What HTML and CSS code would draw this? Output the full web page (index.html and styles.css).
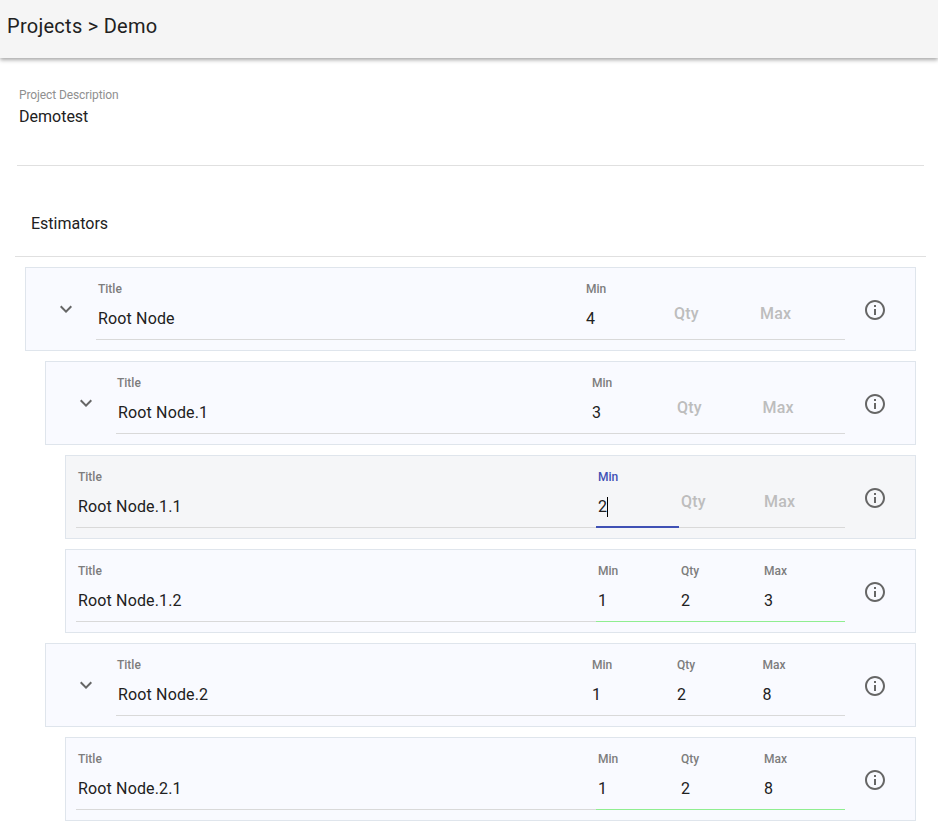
FILE: index.html
```html
<!DOCTYPE html>
<html lang="en">
<head>
    <meta charset="UTF-8">
    <meta name="viewport" content="width=device-width, initial-scale=1.0">
    <title>Projects > Demo</title>
    <link rel="stylesheet" href="styles.css">
</head>
<body>
    <header class="topbar">Projects &gt; Demo</header>

    <section class="description">
        <div class="description_label">Project Description</div>
        <div class="description_value">Demotest</div>
    </section>

    <h2 class="section_title">Estimators</h2>

    <div class="tree">
        <div class="node depth0">
            <svg class="chevron" viewBox="0 0 24 24"><path d="M16.59 8.59 12 13.17 7.41 8.59 6 10l6 6 6-6z"/></svg>
            <div class="fields">
                <div class="field"><span class="label">Title</span><span class="value">Root Node</span></div>
                <div class="field"><span class="label">Min</span><span class="value">4</span></div>
                <div class="field empty"><span class="label">Qty</span></div>
                <div class="field empty"><span class="label">Max</span></div>
            </div>
            <svg class="info" viewBox="0 0 24 24"><path d="M11 7h2v2h-2zm0 4h2v6h-2zm1-9C6.48 2 2 6.48 2 12s4.48 10 10 10 10-4.48 10-10S17.52 2 12 2zm0 18c-4.41 0-8-3.59-8-8s3.59-8 8-8 8 3.59 8 8-3.59 8-8 8z"/></svg>
        </div>

        <div class="node depth1">
            <svg class="chevron" viewBox="0 0 24 24"><path d="M16.59 8.59 12 13.17 7.41 8.59 6 10l6 6 6-6z"/></svg>
            <div class="fields">
                <div class="field"><span class="label">Title</span><span class="value">Root Node.1</span></div>
                <div class="field"><span class="label">Min</span><span class="value">3</span></div>
                <div class="field empty"><span class="label">Qty</span></div>
                <div class="field empty"><span class="label">Max</span></div>
            </div>
            <svg class="info" viewBox="0 0 24 24"><path d="M11 7h2v2h-2zm0 4h2v6h-2zm1-9C6.48 2 2 6.48 2 12s4.48 10 10 10 10-4.48 10-10S17.52 2 12 2zm0 18c-4.41 0-8-3.59-8-8s3.59-8 8-8 8 3.59 8 8-3.59 8-8 8z"/></svg>
        </div>

        <div class="node depth2 hovered">
            <div class="fields">
                <div class="field"><span class="label">Title</span><span class="value">Root Node.1.1</span></div>
                <div class="field focused"><span class="label">Min</span><span class="value caret">2</span></div>
                <div class="field empty"><span class="label">Qty</span></div>
                <div class="field empty"><span class="label">Max</span></div>
            </div>
            <svg class="info" viewBox="0 0 24 24"><path d="M11 7h2v2h-2zm0 4h2v6h-2zm1-9C6.48 2 2 6.48 2 12s4.48 10 10 10 10-4.48 10-10S17.52 2 12 2zm0 18c-4.41 0-8-3.59-8-8s3.59-8 8-8 8 3.59 8 8-3.59 8-8 8z"/></svg>
        </div>

        <div class="node depth2">
            <div class="fields">
                <div class="field"><span class="label">Title</span><span class="value">Root Node.1.2</span></div>
                <div class="field valid"><span class="label">Min</span><span class="value">1</span></div>
                <div class="field valid"><span class="label">Qty</span><span class="value">2</span></div>
                <div class="field valid"><span class="label">Max</span><span class="value">3</span></div>
            </div>
            <svg class="info" viewBox="0 0 24 24"><path d="M11 7h2v2h-2zm0 4h2v6h-2zm1-9C6.48 2 2 6.48 2 12s4.48 10 10 10 10-4.48 10-10S17.52 2 12 2zm0 18c-4.41 0-8-3.59-8-8s3.59-8 8-8 8 3.59 8 8-3.59 8-8 8z"/></svg>
        </div>

        <div class="node depth1">
            <svg class="chevron" viewBox="0 0 24 24"><path d="M16.59 8.59 12 13.17 7.41 8.59 6 10l6 6 6-6z"/></svg>
            <div class="fields">
                <div class="field"><span class="label">Title</span><span class="value">Root Node.2</span></div>
                <div class="field"><span class="label">Min</span><span class="value">1</span></div>
                <div class="field"><span class="label">Qty</span><span class="value">2</span></div>
                <div class="field"><span class="label">Max</span><span class="value">8</span></div>
            </div>
            <svg class="info" viewBox="0 0 24 24"><path d="M11 7h2v2h-2zm0 4h2v6h-2zm1-9C6.48 2 2 6.48 2 12s4.48 10 10 10 10-4.48 10-10S17.52 2 12 2zm0 18c-4.41 0-8-3.59-8-8s3.59-8 8-8 8 3.59 8 8-3.59 8-8 8z"/></svg>
        </div>

        <div class="node depth2">
            <div class="fields">
                <div class="field"><span class="label">Title</span><span class="value">Root Node.2.1</span></div>
                <div class="field valid"><span class="label">Min</span><span class="value">1</span></div>
                <div class="field valid"><span class="label">Qty</span><span class="value">2</span></div>
                <div class="field valid"><span class="label">Max</span><span class="value">8</span></div>
            </div>
            <svg class="info" viewBox="0 0 24 24"><path d="M11 7h2v2h-2zm0 4h2v6h-2zm1-9C6.48 2 2 6.48 2 12s4.48 10 10 10 10-4.48 10-10S17.52 2 12 2zm0 18c-4.41 0-8-3.59-8-8s3.59-8 8-8 8 3.59 8 8-3.59 8-8 8z"/></svg>
        </div>
    </div>
</body>
</html>
```

FILE: styles.css
```css
body
{
    margin: 0;
    height: 831px;
    overflow: hidden;
    background-color: #ffffff;
    color: #212121;
    font-family: Roboto, 'Liberation Sans', sans-serif;
}
.topbar
{
    height: 58px;
    padding-left: 7px;
    background-color: #f5f5f5;
    box-shadow: 0 2px 4px rgba(0, 0, 0, 0.35);
    font-size: 20px;
    letter-spacing: 0.27px;
    line-height: 52px;
}
.description
{
    height: 76px;
    margin: 0 14px 0 17px;
    padding: 31px 2px 0;
    border-bottom: 1px solid #e0e0e0;
}
.description_label
{
    font-size: 12px;
    letter-spacing: -0.1px;
    line-height: 12px;
    color: #8f8f8f;
}
.description_value
{
    margin-top: 7px;
    font-size: 16px;
    line-height: 18px;
}
.section_title
{
    height: 44px;
    margin: 0 12px 10px 15px;
    padding: 46px 0 0 16px;
    border-bottom: 1px solid #e0e0e0;
    font-size: 16px;
    font-weight: 400;
    line-height: 24px;
}
.tree
{
    display: flex;
    flex-direction: column;
    gap: 10px;
    margin-right: 22px;
}
.node
{
    display: flex;
    box-sizing: border-box;
    height: 84px;
    border: 1px solid #dfe5ec;
    background-color: #f9faff;
}
.hovered
{
    background-color: #f5f6f8;
}
.depth0
{
    margin-left: 25px;
}
.depth1
{
    margin-left: 45px;
}
.depth2
{
    margin-left: 65px;
}
.chevron
{
    flex: none;
    width: 24px;
    height: 24px;
    margin: 29px 0 0 28px;
    fill: #666666;
}
.fields
{
    display: grid;
    flex: 1;
    height: 72px;
    margin-left: 10px;
}
.depth0 .fields
{
    margin-left: 18px;
    grid-template-columns: 488px 88px 86px 87px;
}
.depth1 .fields
{
    margin-left: 18px;
    grid-template-columns: 474px 85px 85.5px 84.5px;
}
.depth2 .fields
{
    grid-template-columns: 520px 83px 83px 83px;
}
.depth1 .field:first-child .label
{
    margin-left: -1px;
}
.field
{
    position: relative;
    display: flex;
    flex-direction: column;
    padding-left: 2px;
    border-bottom: 1px solid #d9d9d9;
}
.label
{
    margin-top: 14px;
    font-size: 12px;
    font-weight: 500;
    line-height: 14px;
    color: #7d7d7d;
}
.value
{
    margin-top: 13px;
    font-size: 16px;
    letter-spacing: 0.15px;
    line-height: 20px;
}
.empty .label
{
    margin-top: 36px;
    font-size: 16px;
    letter-spacing: 0.2px;
    line-height: 20px;
    color: #bdbdbd;
}
.focused .label
{
    color: #3f51b5;
}
.focused::after
{
    content: "";
    position: absolute;
    left: 0;
    right: 0;
    bottom: -1px;
    height: 2px;
    background-color: #3f51b5;
}
.caret
{
    align-self: flex-start;
    border-right: 1px solid #000000;
}
.valid
{
    border-bottom-color: #90ee90;
}
.info
{
    flex: none;
    width: 24px;
    height: 24px;
    margin: 30px 28px 0 auto;
    fill: #666666;
}
```
